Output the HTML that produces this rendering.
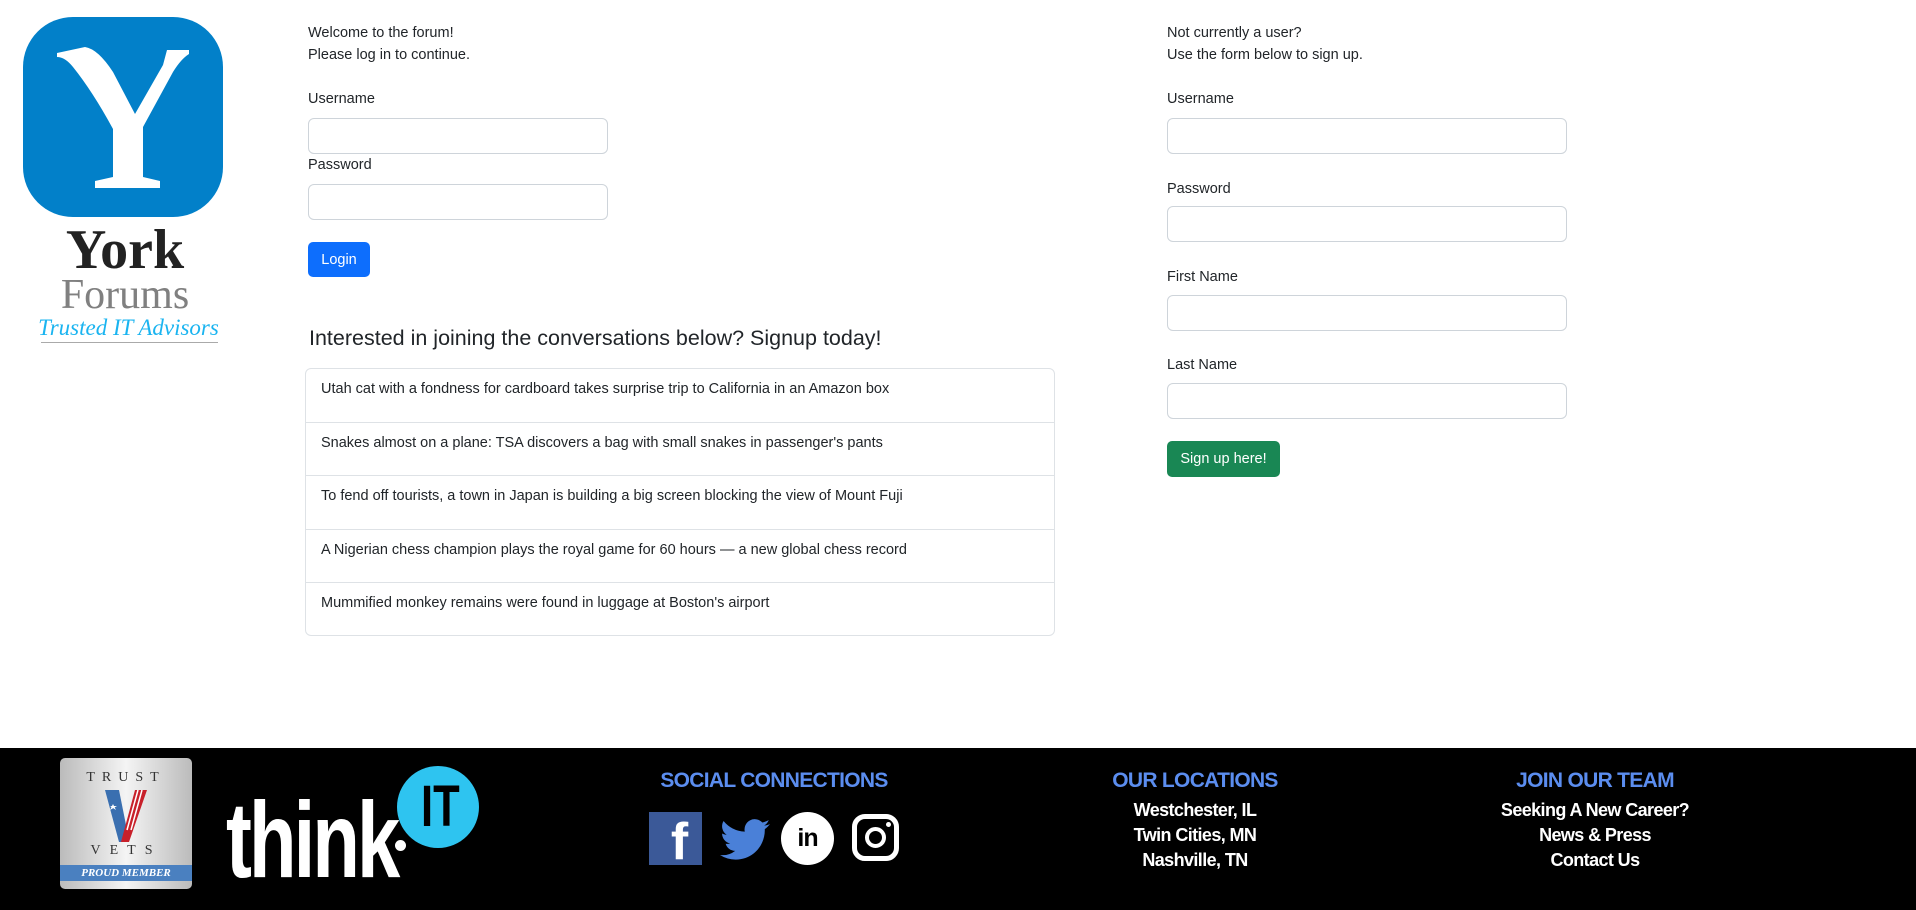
<!DOCTYPE html>
<html><head><meta charset="utf-8"><style>
*{box-sizing:border-box;margin:0;padding:0}
body{width:1916px;height:910px;position:relative;background:#fff;font-family:"Liberation Sans","DejaVu Sans",sans-serif;color:#212529;overflow:hidden}
.a{position:absolute}
.t{font-size:14.5px;line-height:22px}
.inp{position:absolute;border:1px solid #ced4da;border-radius:6px;background:#fff;height:36px}
.btn{position:absolute;color:#fff;font-size:14.5px;border-radius:5px;display:flex;align-items:center;justify-content:center}
.list{position:absolute;left:305px;top:368px;width:750px;height:268px;border:1px solid #dee2e6;border-radius:6px}
.row{height:53.6px;border-bottom:1px solid #dee2e6;padding:12px 15px;font-size:14.5px}
.row:last-child{border-bottom:none}
footer{position:absolute;left:0;top:748px;width:1916px;height:162px;background:#000}
.col{position:absolute;text-align:center;font-weight:bold;color:#fff;font-size:18px;line-height:25px;letter-spacing:-0.6px}
.col h3{color:#5b8def;font-size:21px;letter-spacing:-0.7px;margin-bottom:4px;line-height:26px}
</style></head><body>
<svg class="a" style="left:23px;top:17px" width="200" height="200" viewBox="0 0 200 200">
<rect width="200" height="200" rx="50" fill="#0280c9"/>
<path d="M34 36 L62 30 Q75 32 90 55 L112 97 L140 48 L144 33 L166 33 L166 37 Q158 42 150 55 L120 110 L120 160 L137 164 L137 171 L72 171 L72 164 L90 160 L90 112 Q70 75 50 50 Q42 40 34 40 Z" fill="#fff"/>
</svg>
<div class="a" style="left:0;top:222px;width:250px;text-align:center;font-family:'Liberation Serif',serif;font-weight:bold;font-size:56px;line-height:56px;color:#222">York</div>
<div class="a" style="left:0;top:274px;width:250px;text-align:center;font-family:'Liberation Serif',serif;font-size:42px;line-height:42px;color:#808080">Forums</div>
<div class="a" style="left:0;top:315px;width:257px;text-align:center;font-family:'Liberation Serif',serif;font-style:italic;font-size:23px;line-height:26px;color:#1ab4f0">Trusted IT Advisors</div>
<div class="a" style="left:41px;top:342px;width:177px;height:1px;background:#aaa"></div>

<div class="a t" style="left:308px;top:22px">Welcome to the forum!<br>Please log in to continue.</div>
<div class="a t" style="left:308px;top:88px">Username</div>
<div class="inp" style="left:308px;top:118px;width:300px"></div>
<div class="a t" style="left:308px;top:154px">Password</div>
<div class="inp" style="left:308px;top:184px;width:300px"></div>
<div class="btn" style="left:308px;top:242px;width:62px;height:35px;background:#0d6efd">Login</div>
<div class="a" style="left:309px;top:326px;font-size:21.5px">Interested in joining the conversations below? Signup today!</div>
<div class="list">
<div class="row">Utah cat with a fondness for cardboard takes surprise trip to California in an Amazon box</div>
<div class="row">Snakes almost on a plane: TSA discovers a bag with small snakes in passenger's pants</div>
<div class="row">To fend off tourists, a town in Japan is building a big screen blocking the view of Mount Fuji</div>
<div class="row">A Nigerian chess champion plays the royal game for 60 hours — a new global chess record</div>
<div class="row">Mummified monkey remains were found in luggage at Boston's airport</div>
</div>

<div class="a t" style="left:1167px;top:22px">Not currently a user?<br>Use the form below to sign up.</div>
<div class="a t" style="left:1167px;top:88px">Username</div>
<div class="inp" style="left:1167px;top:118px;width:400px"></div>
<div class="a t" style="left:1167px;top:178px">Password</div>
<div class="inp" style="left:1167px;top:206px;width:400px"></div>
<div class="a t" style="left:1167px;top:266px">First Name</div>
<div class="inp" style="left:1167px;top:295px;width:400px"></div>
<div class="a t" style="left:1167px;top:354px">Last Name</div>
<div class="inp" style="left:1167px;top:383px;width:400px"></div>
<div class="btn" style="left:1167px;top:441px;width:113px;height:36px;background:#198754">Sign up here!</div>

<footer>
<div class="a" style="left:60px;top:10px;width:132px;height:131px;border-radius:5px;background:linear-gradient(90deg,#bbb,#f4f4f4 50%,#bbb)">
<div class="a" style="left:0;top:12px;width:132px;text-align:center;font-family:'Liberation Serif',serif;font-size:14px;letter-spacing:7px;color:#333">TRUST</div>
<svg class="a" style="left:45px;top:32px" width="42" height="52" viewBox="0 0 42 52"><path d="M0 0 L14 0 L22 40 L20 52 L14 52 Z" fill="#3a6fb0"/><path d="M16 52 L30 0 L42 0 L24 52 Z" fill="#c8202a"/><path d="M22 40 L33 0 M26 40 L37 0" stroke="#fff" stroke-width="1.5"/><path d="M5 20 l3 -6 l3 6 l-6 -4 h7z" fill="#fff"/></svg>
<div class="a" style="left:0;top:85px;width:132px;text-align:center;font-family:'Liberation Serif',serif;font-size:14px;letter-spacing:9px;color:#333">VETS</div>
<div class="a" style="left:0;top:107px;width:132px;height:16px;background:#4a80c0;color:#fff;font-family:'Liberation Serif',serif;font-style:italic;font-weight:bold;font-size:11px;text-align:center;line-height:16px">PROUD MEMBER</div>
</div>
<div class="a" style="left:397px;top:18px;width:82px;height:82px;border-radius:50%;background:#2ec4f0"></div>
<div class="a" style="left:421px;top:30px;font-size:58px;font-weight:bold;color:#000;line-height:58px;transform:scaleX(0.75);transform-origin:left">IT</div>
<div class="a" style="left:226px;top:38px;font-size:108px;font-weight:bold;line-height:108px;color:#fff;letter-spacing:-4px;transform:scaleX(0.72);transform-origin:left">think</div>
<div class="a" style="left:395px;top:92px;width:11px;height:11px;border-radius:50%;background:#fff"></div>
<div class="col" style="left:620px;top:20px;width:308px"><h3>SOCIAL CONNECTIONS</h3></div>
<div class="a" style="left:649px;top:64px;width:53px;height:53px;background:#3b5998"><div style="color:#fff;font-weight:bold;font-size:52px;line-height:60px;text-align:center;margin-left:8px">f</div></div>
<svg class="a" style="left:720px;top:70px" width="50" height="44" viewBox="0 0 24 20"><path d="M24 2.3c-.9.4-1.8.7-2.8.8 1-.6 1.8-1.6 2.2-2.7-1 .6-2 1-3.1 1.2A4.9 4.9 0 0 0 11.900 6 14 14 0 0 1 1.700.9a4.9 4.9 0 0 0 1.5 6.6c-.8 0-1.6-.3-2.2-.6 0 2.4 1.7 4.4 3.9 4.800-.7.2-1.5.2-2.2.1.6 2 2.4 3.4 4.6 3.4A9.9 9.9 0 0 1 0 17.2 14 14 0 0 0 7.500 19.4c9.1 0 14-7.5 14-14v-.6c1-.7 1.800-1.600 2.500-2.500z" fill="#4a80d8"/></svg>
<div class="a" style="left:781px;top:64px;width:53px;height:53px;border-radius:50%;background:#fff;color:#000;font-weight:bold;font-size:25px;text-align:center;line-height:53px;letter-spacing:-1px">in</div>
<div class="a" style="left:852px;top:66px;width:47px;height:47px;border:5px solid #fff;border-radius:13px"><div class="a" style="left:8px;top:8px;width:21px;height:21px;border:4px solid #fff;border-radius:50%"></div><div class="a" style="left:29px;top:3px;width:5px;height:5px;border-radius:50%;background:#fff"></div></div>
<div class="col" style="left:1045px;top:20px;width:300px"><h3>OUR LOCATIONS</h3>Westchester, IL<br>Twin Cities, MN<br>Nashville, TN</div>
<div class="col" style="left:1445px;top:20px;width:300px"><h3>JOIN OUR TEAM</h3>Seeking A New Career?<br>News &amp; Press<br>Contact Us</div>
</footer>
</body></html>
